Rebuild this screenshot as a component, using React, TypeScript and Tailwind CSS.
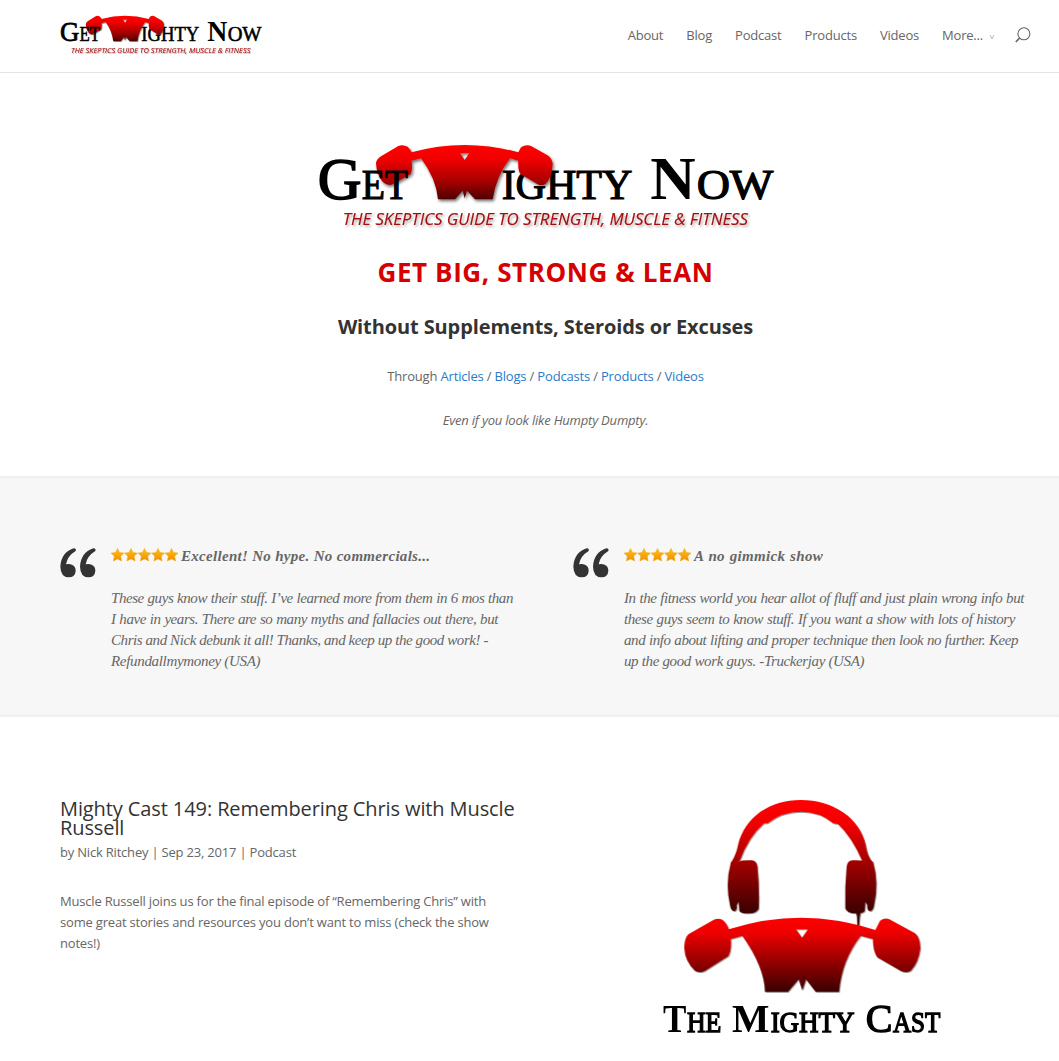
import React from "react";

const SERIF = "font-['Liberation_Serif',serif]";

function Logo({ id, className }: { id: string; className: string }) {
  return (
    <svg viewBox="0 0 1410 315" preserveAspectRatio="none" className={className} role="img" aria-label="Get Mighty Now">
      <defs>
        <linearGradient id={id} gradientUnits="userSpaceOnUse" x1="0" y1="30" x2="0" y2="196">
          <stop offset="0" stopColor="#ff0000" />
          <stop offset="0.25" stopColor="#f20000" />
          <stop offset="0.65" stopColor="#a80000" />
          <stop offset="1" stopColor="#4a0000" />
        </linearGradient>
        <filter id={id + "-shadow"} x="-10%" y="-10%" width="120%" height="130%">
          <feDropShadow dx="4" dy="6" stdDeviation="4" floodColor="#000" floodOpacity="0.55" />
        </filter>
        <filter id={id + "-soft"} x="-5%" y="-20%" width="110%" height="160%">
          <feDropShadow dx="5" dy="6" stdDeviation="2.5" floodColor="#000" floodOpacity="0.3" />
        </filter>
      </defs>
      <g className={SERIF} fill="#000" stroke="#000" strokeWidth="3.5">
        <text x="572" y="193" fontSize="129" textLength="392" lengthAdjust="spacingAndGlyphs">IGHTY</text>
        <text x="1018" y="193" fontSize="184" fontWeight="bold" strokeWidth="0" textLength="136" lengthAdjust="spacingAndGlyphs">N</text>
        <text x="1157" y="193" fontSize="129" textLength="230" lengthAdjust="spacingAndGlyphs">OW</text>
      </g>
      <path
        filter={`url(#${id}-shadow)`}
        fill={`url(#${id})`}
        fillRule="evenodd"
        d="M195 85Q196 73 210 64L262 33Q275 27 290 35Q298 43 302 52Q460 8 622 52L630 37Q645 27 660 33L712 62Q724 72 725 87Q723 130 702 148Q690 154 680 148L630 118Q620 110 622 77L597 70Q555 125 545 193L492 193L468 167L461 190L455 167L432 193L381 193Q375 130 330 70L302 77Q305 108 298 118L245 148Q230 155 215 140Q197 120 195 85ZM447 54L461 75L475 54Z"
      />
      <g className={SERIF} fill="#000" stroke="#000" strokeWidth="3.5">
        <text x="20" y="192" fontSize="180" strokeWidth="5" textLength="131" lengthAdjust="spacingAndGlyphs">G</text>
        <text x="152" y="193" fontSize="129" textLength="139" lengthAdjust="spacingAndGlyphs">ET</text>
      </g>
      <text
        x="95"
        y="270"
        fontSize="50"
        textLength="1216"
        lengthAdjust="spacingAndGlyphs"
        fill="#a40c0c"
        stroke="#a40c0c"
        strokeWidth="0.4"
        filter={`url(#${id}-soft)`}
        className="font-['Open_Sans',sans-serif] italic"
      >
        THE SKEPTICS GUIDE TO STRENGTH, MUSCLE &amp; FITNESS
      </text>
    </svg>
  );
}

const CUP =
  "M243 215L268 215Q275 210 305 211Q320 212 322 230Q328 290 326 355Q322 370 295 370Q272 370 268 362L266 335L260 345Q262 362 252 363Q242 362 240 345Q225 280 243 215Z";

function CastLogo() {
  return (
    <svg viewBox="0 0 900 780" className="block h-[260px] w-[300px]" role="img" aria-label="The Mighty Cast">
      <defs>
        <linearGradient id="phones" gradientUnits="userSpaceOnUse" x1="0" y1="30" x2="0" y2="370">
          <stop offset="0" stopColor="#ff0000" />
          <stop offset="0.2" stopColor="#f40000" />
          <stop offset="0.6" stopColor="#980000" />
          <stop offset="1" stopColor="#3a0000" />
        </linearGradient>
        <linearGradient id="bell" gradientUnits="userSpaceOnUse" x1="0" y1="382" x2="0" y2="605">
          <stop offset="0" stopColor="#ff0000" />
          <stop offset="0.2" stopColor="#f00000" />
          <stop offset="0.6" stopColor="#940000" />
          <stop offset="1" stopColor="#3a0000" />
        </linearGradient>
        <filter id="cast-shadow" x="-10%" y="-10%" width="120%" height="120%">
          <feDropShadow dx="2" dy="3" stdDeviation="2" floodColor="#000" floodOpacity="0.45" />
        </filter>
      </defs>
      <g filter="url(#cast-shadow)">
        <g fill="url(#phones)">
          <path d="M244 217Q260 190 264 165C285 80 360 30 452 30C550 30 630 85 647 165Q652 200 668 217L638 215Q605 140 564 102L550 100Q510 65 452 65Q395 65 352 100L342 100Q295 140 268 215Z" />
          <path d={CUP} />
          <path d={CUP} transform="translate(912 0) scale(-1 1)" />
        </g>
        <path
          fill="url(#bell)"
          fillRule="evenodd"
          d="M103 475Q103 445 115 433L190 390Q205 383 218 390Q232 402 236 418Q455 347 676 420L690 392Q705 382 718 388L795 430Q810 442 811 475Q805 520 782 542Q768 550 752 542L682 502Q668 480 669 447L632 437Q575 510 567 605L497 605L468 568L457 601L446 568L414 605L345 605Q343 530 277 437L242 447Q245 480 235 498L165 542Q150 550 135 542Q105 515 103 475ZM438 418L456 443L474 418Z"
        />
        <path fill="#3a0000" d="M618 366L632 366L629 380L627 406L622 406L621 380Z" />
      </g>
      <g className={SERIF} fill="#000" stroke="#000" strokeWidth="4">
        <text x="39" y="726" fontSize="122" fontWeight="bold" strokeWidth="0" textLength="70" lengthAdjust="spacingAndGlyphs">T</text>
        <text x="111" y="726" fontSize="86" textLength="103" lengthAdjust="spacingAndGlyphs">HE</text>
        <text x="246" y="726" fontSize="122" fontWeight="bold" strokeWidth="0" textLength="112" lengthAdjust="spacingAndGlyphs">M</text>
        <text x="362" y="726" fontSize="86" textLength="251" lengthAdjust="spacingAndGlyphs">IGHTY</text>
        <text x="647" y="726" fontSize="122" textLength="80" lengthAdjust="spacingAndGlyphs">C</text>
        <text x="729" y="726" fontSize="86" textLength="142" lengthAdjust="spacingAndGlyphs">AST</text>
      </g>
    </svg>
  );
}

function Stars() {
  return (
    <svg viewBox="0 0 67 14" className="mr-[3px] block h-[14px] w-[67px]" aria-hidden="true">
      <defs>
        <linearGradient id="gold" x1="0" y1="0" x2="0" y2="1">
          <stop offset="0" stopColor="#fcc419" />
          <stop offset="1" stopColor="#f08c00" />
        </linearGradient>
      </defs>
      {[0, 1, 2, 3, 4].map((i) => (
        <path
          key={i}
          transform={`translate(${i * 13.5} 0)`}
          fill="url(#gold)"
          stroke="#f5a80c"
          strokeWidth="0.5"
          strokeLinejoin="round"
          d="M6.5 0.4L8.5 4.5L13 5.1L9.7 8.3L10.6 13L6.5 10.9L2.4 13L3.3 8.3L0 5.1L4.5 4.5Z"
        />
      ))}
    </svg>
  );
}

function QuoteMark() {
  return (
    <svg viewBox="0 0 108 90" className="block h-[30px] w-[36px] shrink-0" fill="#333" aria-hidden="true">
      <path d="M46 2Q49 5 47 9Q22 24 18 49Q27 46 36 50Q47 55 47 68Q46 87 26 88Q2 87 1 56Q3 14 41 1Q44 0 46 2Z" />
      <path transform="translate(59 0)" d="M46 2Q49 5 47 9Q22 24 18 49Q27 46 36 50Q47 55 47 68Q46 87 26 88Q2 87 1 56Q3 14 41 1Q44 0 46 2Z" />
    </svg>
  );
}

type Line = { text: string; width: string };

function Testimonial({ title, titleWidth, lines }: { title: string; titleWidth: string; lines: Line[] }) {
  return (
    <article className="flex gap-[15px]">
      <QuoteMark />
      <div className={`${SERIF} text-[15px] leading-[21px] tracking-[-0.4px] whitespace-nowrap text-[#666] italic`}>
        <h3 className="flex h-[21px] items-start font-bold tracking-[0.3px]">
          <Stars />
          <span className={`${titleWidth} mt-[-2px] [text-align-last:justify]`}>{title}</span>
        </h3>
        <p className="mt-[19px]">
          {lines.map((l) => (
            <span key={l.text} className={`${l.width} block [text-align-last:justify]`}>
              {l.text}
            </span>
          ))}
        </p>
      </div>
    </article>
  );
}

const FIRST: Line[] = [
  { text: "These guys know their stuff. I’ve learned more from them in 6 mos than", width: "w-[402px] tracking-[-0.43px]" },
  { text: "I have in years. There are so many myths and fallacies out there, but", width: "w-[387px] tracking-[-0.43px]" },
  { text: "Chris and Nick debunk it all! Thanks, and keep up the good work! -", width: "w-[377px] tracking-[-0.43px]" },
  { text: "Refundallmymoney (USA)", width: "w-[149px] tracking-[-0.32px]" },
];

const SECOND: Line[] = [
  { text: "In the fitness world you hear allot of fluff and just plain wrong info but", width: "w-[400px] tracking-[-0.43px]" },
  { text: "these guys seem to know stuff. If you want a show with lots of history", width: "w-[391px] tracking-[-0.43px]" },
  { text: "and info about lifting and proper technique then look no further. Keep", width: "w-[394px] tracking-[-0.43px]" },
  { text: "up the good work guys. -Truckerjay (USA)", width: "w-[240px] tracking-[-0.4px]" },
];

export default function App() {
  return (
    <div className="h-[1061px] w-[1059px] overflow-hidden bg-white font-['Open_Sans',sans-serif] text-[13px] leading-[21px] tracking-[-0.2px] text-[#666]">
      <header className="flex h-[73px] items-start justify-between border-b border-[#e3e3e3] pr-[28px] pl-[57px]">
        <Logo id="small" className="mt-[11px] block h-[49px] w-[208px]" />
        <nav className="mt-[25px] flex gap-[23px]">
          <a>About</a>
          <a>Blog</a>
          <a>Podcast</a>
          <a>Products</a>
          <a>Videos</a>
          <a className="flex">
            More...
            <svg viewBox="0 0 6 6" className="mt-[9px] ml-[6px] size-[6px]" fill="none" stroke="#bbb">
              <path d="M1.2 1L3 5L4.8 1" />
            </svg>
          </a>
          <svg viewBox="0 0 16 16" className="mt-[2px] ml-[-3px] size-[16px]" fill="none" stroke="#666" strokeWidth="1.1">
            <circle cx="8.9" cy="6.8" r="6" />
            <path d="M4.7 11L0.8 15" strokeWidth="1.7" />
          </svg>
        </nav>
      </header>

      <section className="flex h-[403px] flex-col items-center pl-[32px] text-center">
        <Logo id="large" className="mt-[62px] block h-[105px] w-[470px]" />
        <h1 className="mt-[14px] text-[26px] leading-[36px] font-bold tracking-[0.6px] text-[#d60000]">GET BIG, STRONG &amp; LEAN</h1>
        <h2 className="mt-[24px] text-[20px] leading-[26px] font-bold tracking-[-0.11px] text-[#333]">
          Without Supplements, Steroids or Excuses
        </h2>
        <p className="mt-[26px] tracking-[-0.18px]">
          Through <a className="text-[#2a7ac9]">Articles</a> / <a className="text-[#2a7ac9]">Blogs</a> /{" "}
          <a className="text-[#2a7ac9]">Podcasts</a> / <a className="text-[#2a7ac9]">Products</a> /{" "}
          <a className="text-[#2a7ac9]">Videos</a>
        </p>
        <p className="mt-[23px] italic">Even if you look like Humpty Dumpty.</p>
      </section>

      <section className="h-[241px] bg-[#f7f7f7] bg-[linear-gradient(#ededed,#f7f7f7_4px,#f7f7f7_237px,#ededed)] pt-[72px] pl-[60px]">
        <div className="grid grid-cols-[458px_458px] gap-[55px]">
          <Testimonial title="Excellent! No hype. No commercials..." titleWidth="w-[248px]" lines={FIRST} />
          <Testimonial title="A no gimmick show" titleWidth="w-[129px]" lines={SECOND} />
        </div>
      </section>

      <section className="grid grid-cols-[458px_458px] gap-[55px] pl-[60px]">
        <article className="pt-[82px]">
          <h2 className="text-[20px] leading-[19px] tracking-[-0.1px] text-[#333]">
            Mighty Cast 149: Remembering Chris with Muscle Russell
          </h2>
          <p className="mt-[5px]">by Nick Ritchey | Sep 23, 2017 | Podcast</p>
          <p className="mt-[28px] pr-[20px] tracking-[-0.19px]">
            Muscle Russell joins us for the final episode of “Remembering Chris” with some great stories and resources you
            don’t want to miss (check the show notes!)
          </p>
        </article>
        <div className="pt-[73px] pl-[77px]">
          <CastLogo />
        </div>
      </section>
    </div>
  );
}
